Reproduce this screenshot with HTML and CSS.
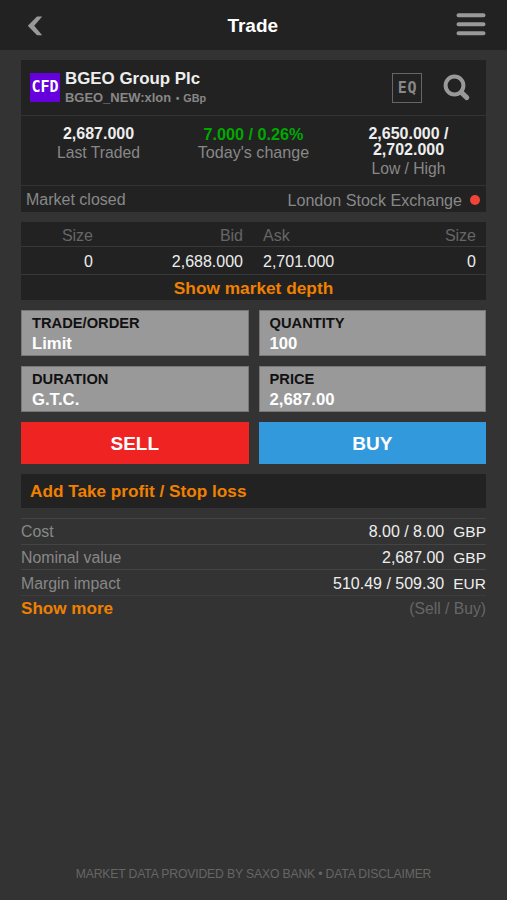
FILE: index.html
```html
<!DOCTYPE html>
<html lang="en">
<head>
<meta charset="utf-8">
<title>Trade</title>
<link rel="stylesheet" href="styles.css">
</head>
<body>
<div class="app">
  <header class="topbar">
    <svg class="back" viewBox="0 0 16 20" width="16" height="20"><path d="M10 .5H15.2L7.2 9.8 15.2 19.2H10L.8 9.8Z"/></svg>
    <h1>Trade</h1>
    <svg class="menu" viewBox="0 0 30 24" width="30" height="24"><path d="M2.5 3.2H27.5M2.5 12.2H27.5M2.5 21.3H27.5"/></svg>
  </header>
  <main>
    <section class="panel instrument">
      <div class="title-row">
        <span class="cfd">CFD</span>
        <div class="names">
          <div class="name">BGEO Group Plc</div>
          <div class="symbol">BGEO_NEW:xlon <i>•</i><span>GBp</span></div>
        </div>
        <span class="eq">EQ</span>
        <svg class="search" viewBox="0 0 28 28" width="28" height="28"><circle cx="11.5" cy="11.5" r="8.9"/><path d="M18.3 18.4L23.8 23.6"/></svg>
      </div>
      <div class="stats">
        <div><b>2,687.000</b><span>Last Traded</span></div>
        <div><b class="up">7.000 / 0.26%</b><span class="chg">Today's change</span></div>
        <div><b>2,650.000 /<br>2,702.000</b><span>Low / High</span></div>
      </div>
      <div class="market"><span>Market closed</span><span class="exchange">London Stock Exchange</span><i class="dot"></i></div>
    </section>
    <section class="panel quotes">
      <div class="quote head"><span>Size</span><span>Bid</span><span class="ask">Ask</span><span>Size</span></div>
      <div class="quote"><span>0</span><span>2,688.000</span><span class="ask">2,701.000</span><span>0</span></div>
      <div class="depth">Show market depth</div>
    </section>
    <section class="order">
      <div class="field"><label>TRADE/ORDER</label><b>Limit</b></div>
      <div class="field"><label>QUANTITY</label><b>100</b></div>
      <div class="field"><label>DURATION</label><b>G.T.C.</b></div>
      <div class="field"><label>PRICE</label><b>2,687.00</b></div>
      <button class="sell">SELL</button>
      <button class="buy">BUY</button>
    </section>
    <section class="panel add">Add Take profit / Stop loss</section>
    <section class="costs">
      <div><span>Cost</span><span class="val">8.00 / 8.00</span><span class="cur">GBP</span></div>
      <div><span>Nominal value</span><span class="val">2,687.00</span><span class="cur">GBP</span></div>
      <div><span>Margin impact</span><span class="val">510.49 / 509.30</span><span class="cur">EUR</span></div>
      <div><b>Show more</b><span class="note">(Sell / Buy)</span></div>
    </section>
  </main>
  <footer>MARKET DATA PROVIDED BY SAXO BANK • DATA DISCLAIMER</footer>
</div>
</body>
</html>
```
FILE: styles.css
```css
* { box-sizing: border-box; }
body {
  margin: 0;
  background: #333;
  color: #eee;
  font: 16px/20px "Liberation Sans", Arial, sans-serif;
}
.app { height: 900px; display: flex; flex-direction: column; overflow: hidden; }
.topbar {
  height: 50px;
  flex: none;
  display: flex;
  align-items: center;
  justify-content: space-between;
  padding: 0 20.5px 0 27px;
  background: #222;
}
.topbar h1 { margin: 2px 0 0 6px; font-size: 19px; color: #fff; }
.back { margin-top: 1px; fill: #999; }
.menu { margin-top: -2px; stroke: #999; stroke-width: 4; stroke-linecap: round; }
main { padding: 10px 21px 0; display: flex; flex-direction: column; gap: 10px; }
.panel { background: #222; }

.title-row { height: 55px; display: flex; align-items: center; padding: 0 15px 0 9px; }
.cfd {
  width: 30px; height: 29px; margin-right: 5px;
  background: #60d; color: #fff; text-align: center;
  font: bold 15px/29px "DejaVu Sans Mono", monospace;
}
.names { flex: 1; }
.name { font-size: 16.9px; font-weight: bold; line-height: 20px; }
.symbol { font-size: 12.95px; font-weight: bold; line-height: 17px; color: #888; }
.symbol i { margin: 0 4px 0 1px; font-size: 10px; }
.symbol span { font-size: 10.8px; }
.eq {
  width: 30px; height: 30px; margin-right: 21px; padding-left: 1px;
  border: 1.5px solid #666; color: #888; text-align: center;
  font: bold 15px/28px "DejaVu Sans Mono", monospace;
  letter-spacing: .8px;
}
.search { fill: none; stroke: #999; stroke-width: 4; }
.search path { stroke-width: 5; stroke-linecap: round; }

.stats {
  height: 71px; display: grid; grid-template-columns: repeat(3, 1fr);
  border: solid #333; border-width: 1px 0; padding-top: 10px;
  text-align: center; color: #888;
}
.stats b { display: block; line-height: 16px; color: #eee; }
.stats b.up { color: #00a800; font-size: 16.2px; }
.stats span { display: block; font-size: 15.7px; line-height: 21px; }
.stats .chg { font-size: 16.1px; }
.market { height: 26px; display: flex; align-items: center; padding: 2px 6px 0 5px; color: #888; }
.exchange { margin-left: auto; font-size: 16.1px; }
.dot { width: 10px; height: 10px; margin-left: 8px; border-radius: 50%; background: #f04438; }

.quotes { height: 78px; }
.quote {
  height: 28px; line-height: 29px; display: grid; grid-template-columns: 72px 150px 1fr 100px;
  padding-right: 10px; border-bottom: 1px solid #383838; text-align: right;
}
.quote.head { height: 25px; line-height: 27px; color: #666; }
.quote .ask { text-align: left; padding-left: 20px; }
.depth { line-height: 26px; text-align: center; font-size: 17.3px; font-weight: bold; color: #f08000; }

.order { display: grid; grid-template-columns: 1fr 1fr; gap: 10px; }
.field { height: 46px; padding: 3px 10px; border: 1px solid #777; background: #999; }
.field label { display: block; font-size: 14.7px; font-weight: bold; line-height: 19px; color: #111; }
.field b { display: block; font-size: 16.7px; line-height: 21px; color: #fff; }
.order button {
  height: 42px; border: 0; padding: 0;
  color: #fff; font: bold 19px/43px "Liberation Sans", Arial, sans-serif;
}
.sell { background: #f02323; }
.buy { background: #3399dd; }
.add { height: 34px; line-height: 35px; padding-left: 9px; font-size: 17.2px; font-weight: bold; color: #f08000; }

.costs div {
  height: 25.67px; display: flex; align-items: center; padding-top: 2px;
  border-top: 1px solid #444; color: #888;
}
.costs div:last-child { border-color: #3d3d3d; }
.costs span:first-child { font-size: 15.85px; }
.costs .val { margin-left: auto; color: #eee; }
.costs .cur { margin-left: 9px; color: #eee; font-size: 15.5px; }
.costs b { font-size: 17.1px; color: #f08000; }
.costs .note { margin-left: auto; font-size: 15.7px; color: #666; }

footer { margin-top: auto; padding-bottom: 16px; text-align: center; font-size: 12.2px; letter-spacing: -.15px; color: #666; }
```
